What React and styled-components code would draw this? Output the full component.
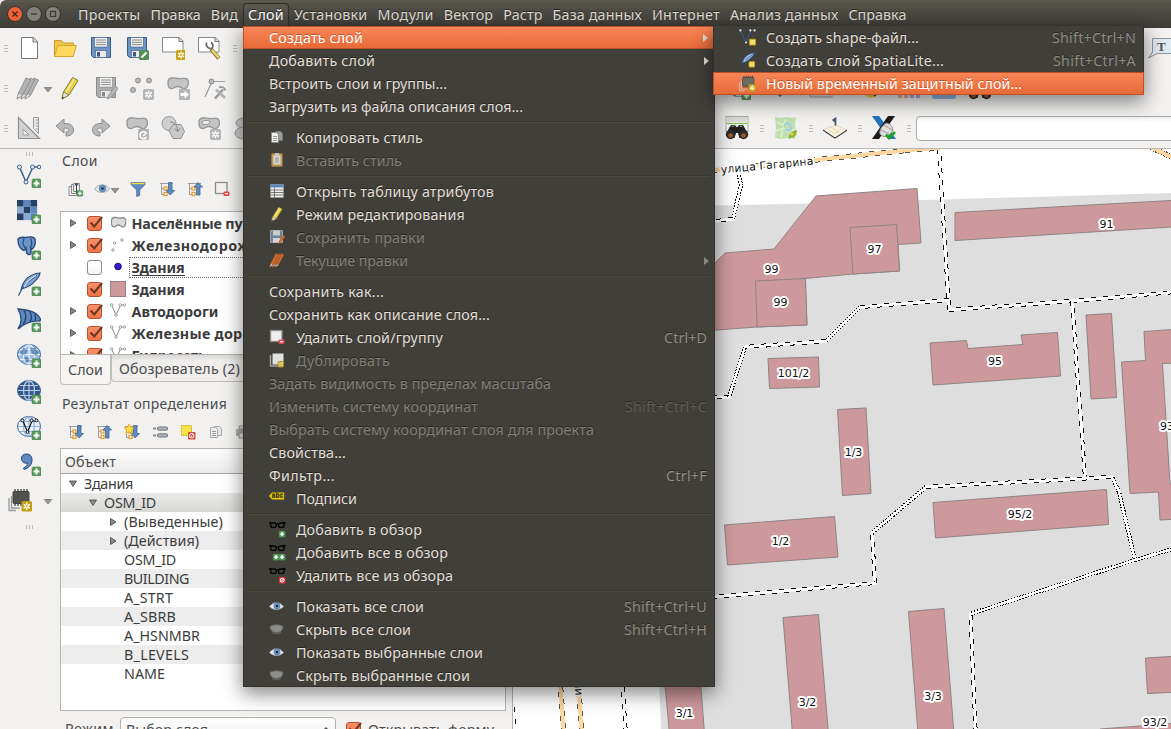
import React, { useLayoutEffect, useRef } from "react";
import styled, { createGlobalStyle, css } from "styled-components";

const Global = createGlobalStyle`
  * { box-sizing: border-box; }
  html, body { margin: 0; padding: 0; overflow: hidden; }
  body { font-family: "Noto Sans", "Open Sans", sans-serif; font-size: 14.3px; color: #4c4c4c; background: #f2f1f0; }
  svg { display: block; flex: none; }
`;

/* ---------- text with a fixed measure ---------- */
const TextSpan = styled.span`
  display: inline-block;
  white-space: pre;
  flex: none;
  line-height: 1;
`;
function Text({ w, children, className }) {
  const ref = useRef(null);
  useLayoutEffect(() => {
    const el = ref.current;
    el.style.letterSpacing = "0px";
    const natural = el.getBoundingClientRect().width;
    el.style.letterSpacing = `${(w - natural) / children.length}px`;
  }, [w, children]);
  return <TextSpan ref={ref} className={className}>{children}</TextSpan>;
}

/* ---------- window ---------- */
const Window = styled.div`
  position: relative;
  width: 1171px;
  height: 729px;
  overflow: hidden;
  display: flex;
  flex-direction: column;
  background: #f2f1f0;
`;
const MenuBar = styled.header`
  height: 28px;
  flex: none;
  display: flex;
  align-items: center;
  padding-left: 7px;
  background: linear-gradient(#56534b 0, #5f5c53 1px, #55524a 3px, #3e3d38 27px, #3a3935);
  border-radius: 6px 0 0 0;
`;
const WindowButtons = styled.div`
  display: flex;
  gap: 3px;
  width: 66px;
`;
const BarItem = styled.div`
  height: 28px;
  display: flex;
  align-items: center;
  color: #dfdbd2;
  border: 1px solid transparent;
  border-width: 0 1px;
  text-shadow: 0 -1px 0 #2a2926;
  padding: 2px 4px 0;
  ${(p) => p.$open && css`
    height: 25px;
    margin-top: 3px;
    padding-top: 0;
    padding-bottom: 1px;
    border: 1px solid #2f2e2a;
    border-bottom: 0;
    border-radius: 4px 4px 0 0;
    background: linear-gradient(#5a584f, #45443e);
    color: #fff;
  `}
`;

/* ---------- toolbars ---------- */
const Toolbars = styled.div`
  height: 121px;
  flex: none;
  border-bottom: 1px solid #b9b7b3;
  background: #f2f1f0;
`;
const ToolRow = styled.div`
  height: 40px;
  display: flex;
  align-items: center;
`;
const Cell = styled.div`
  width: ${(p) => p.$w || 36}px;
  flex: none;
  display: flex;
  align-items: center;
  justify-content: center;
`;
const Gap = styled.div`
  width: ${(p) => p.$w}px;
  flex: none;
`;
const Handle = styled.div`
  width: ${(p) => p.$w || 11}px;
  height: ${(p) => p.$h || 12}px;
  flex: none;
  display: flex;
  flex-direction: ${(p) => (p.$flat ? "row" : "column")};
  align-items: center;
  justify-content: center;
  gap: 2px;
  &::before, &::after { content: ""; }
  &::before, &::after, & > i {
    width: ${(p) => (p.$flat ? 1 : 4)}px;
    height: ${(p) => (p.$flat ? 4 : 1)}px;
    background: #bdbbb8;
  }
`;
const Grip = (p) => <Handle {...p}><i /></Handle>;
const SearchBox = styled.div`
  width: 265px;
  height: 25px;
  margin-left: 1px;
  flex: none;
  border: 1px solid #a9a7a3;
  border-radius: 4px;
  background: linear-gradient(#f0f0f0, #fff 5px);
`;

/* ---------- body ---------- */
const Body = styled.div`
  flex: 1;
  min-height: 0;
  display: flex;
`;
const SideBar = styled.nav`
  width: 60px;
  flex: none;
  display: flex;
  flex-direction: column;
`;
const SideCell = styled.div`
  height: 36px;
  flex: none;
  display: flex;
  align-items: center;
  padding-left: ${(p) => p.$x || 17}px;
`;
const Dock = styled.section`
  width: 453px;
  flex: none;
  display: flex;
  flex-direction: column;
  border-right: 1px solid #b4b2ae;
`;
const DockTitle = styled.h2`
  margin: ${(p) => p.$gap || 0}px 0 0;
  height: 24px;
  flex: none;
  padding-left: 2px;
  font-size: 14px;
  font-weight: 400;
  display: flex;
  align-items: center;
`;
const DockTools = styled.div`
  height: 32px;
  margin-bottom: ${(p) => p.$below || 0}px;
  flex: none;
  display: flex;
  align-items: center;
  padding-left: 2px;
`;
const Box = styled.div`
  width: 446px;
  height: ${(p) => p.$h}px;
  flex: none;
  overflow: hidden;
  background: #fff;
  border: 1px solid #b6b4b0;
`;
const LayerRow = styled.div`
  height: 22px;
  display: flex;
  align-items: center;
  font-weight: 700;
  color: #3c3c3c;
`;
const Slot = styled.div`
  width: ${(p) => p.$w}px;
  flex: none;
  display: flex;
  align-items: center;
`;
const LayerName = styled.div`
  height: 21px;
  padding: 2px 0 0 2px;
  display: flex;
  flex: 1;
  align-items: center;
  border: 1px dotted transparent;
  ${(p) => p.$current && css`
    padding-top: 3px;
    border-color: #666;
    span { border-bottom: 1px solid #3c3c3c; }
  `}
`;
const Check = styled.div`
  width: 15px;
  height: 15px;
  flex: none;
  border-radius: 3px;
  border: 1px solid ${(p) => (p.$on ? "#b9512c" : "#8d8b88")};
  background: ${(p) => (p.$on ? "linear-gradient(#f9906a, #ee7448)" : "linear-gradient(#fff, #f5f5f5)")};
  svg { margin-top: -1px; overflow: visible; }
`;
const Tabs = styled.div`
  height: 31px;
  flex: none;
  display: flex;
  align-items: flex-start;
`;
const Tab = styled.div`
  height: ${(p) => (p.$on ? 30 : 27)}px;
  width: ${(p) => p.$w}px;
  padding-left: 7px;
  padding-top: ${(p) => (p.$on ? 2 : 3)}px;
  display: flex;
  align-items: center;
  border: 1px solid #bfbdb9;
  border-top: 0;
  border-radius: 0 0 4px 4px;
  background: ${(p) => (p.$on ? "#f6f5f4" : "linear-gradient(#d9d8d6, #efeeed 6px, #f0efee)")};
`;
const TreeHead = styled.div`
  height: 25px;
  padding: 3px 0 0 4px;
  display: flex;
  align-items: center;
  background: linear-gradient(#fdfdfd, #ecebea);
  border-bottom: 1px solid #a5a3a0;
`;
const TreeRow = styled.div`
  height: 19px;
  display: flex;
  align-items: center;
  color: #3c3c3c;
  padding: 1px 0 0 ${(p) => 6 + p.$depth * 20}px;
  background: ${(p) => (p.$sel ? "linear-gradient(#e8e8e7, #d9d9d7)" : p.$alt ? "#ededed" : "#fff")};
`;
const ModeRow = styled.div`
  display: flex;
  padding-left: 5px;
  margin-top: 6px;
  height: 24px;
  flex: none;
  align-items: center;
`;
const Combo = styled.div`
  width: 216px;
  height: 24px;
  margin: 0 10px 0 6px;
  padding: 3px 5px 0 5px;
  flex: none;
  display: flex;
  align-items: center;
  justify-content: space-between;
  border: 1px solid #b1afab;
  border-radius: 4px;
  background: linear-gradient(#fff, #efeeed);
`;
const FormLabel = styled.div`
  padding-left: 7px;
`;
const MapView = styled.main`
  flex: 1;
  min-width: 0;
  background: #fff;
`;

/* ---------- drop-down menus ---------- */
const Popup = styled.div`
  position: absolute;
  left: ${(p) => p.$x}px;
  top: 26px;
  width: ${(p) => p.$w}px;
  background: #403f3a;
  box-shadow: 0 6px 18px 1px rgba(0, 0, 0, 0.46), inset 1px 0 #32312d, inset -1px -1px #32312d;
`;
const Item = styled.div`
  height: 23px;
  display: flex;
  align-items: center;
  padding: 1px ${(p) => p.$right}px 0 ${(p) => p.$left}px;
  color: ${(p) => (p.$off ? "#827f78" : "#e3dfd6")};
  text-shadow: 0 -1px 0 rgba(20, 20, 18, 0.6);
  position: relative;
  ${(p) => p.$hot && css`
    color: #fff;
    text-shadow: 0 -1px 0 rgba(150, 60, 20, 0.6);
    background: linear-gradient(#f98658, #e76a37);
    border: 1px solid #ba4f28;
    padding: 1px ${p.$right - 1}px 0 ${p.$left - 1}px;
  `}
`;
const IconSlot = styled.div`
  width: ${(p) => p.$w}px;
  flex: none;
  margin-top: -2px;
  opacity: ${(p) => (p.$off ? 0.85 : 1)};
`;
const Shortcut = styled.div`
  margin-left: auto;
  display: flex;
  color: ${(p) => (p.$off ? "#5f5d57" : "#8f8c84")};
`;
const Arrow = styled.div`
  position: absolute;
  right: 6px;
  width: 0;
  border: 4px solid transparent;
  border-left: 5px solid ${(p) => (p.$off ? "#8a877f" : "#e3dfd6")};
  border-right: 0;
`;
const Rule = styled.hr`
  height: 2px;
  margin: 3px 5px;
  border: 0;
  border-top: 1px solid #37362f;
  border-bottom: 1px solid #4a4943;
`;

/* ---------- icons ---------- */
const Svg = ({ s = 24, v = 24, children }) => (
  <svg width={s} height={s} viewBox={`0 0 ${v} ${v}`} fill="none">{children}</svg>
);
const Plus = ({ x = 15, y = 15, s = 9 }) => (
  <g transform={`translate(${x} ${y}) scale(${s / 9})`}>
    <rect width="9" height="9" rx="1.5" fill="#5a9a5d" stroke="#3f7a42" strokeWidth=".6" />
    <path d="M4.5 1.6v5.8M1.6 4.5h5.8" stroke="#fff" strokeWidth="2" />
  </g>
);
const Star = ({ x = 14, y = 14, c = "#c8a415", s = 10 }) => (
  <g transform={`translate(${x} ${y}) scale(${s / 10})`}>
    <rect width="10" height="10" rx="1.5" fill={c} />
    <path d="M5 1.5v7M2 3.2l6 3.6M8 3.2L2 6.8" stroke="#fff" strokeWidth="1.4" />
    <circle cx="5" cy="5" r=".9" fill={c} />
  </g>
);
const Tri = ({ down, s = 8, c = "#8b8987" }) => (
  <Svg s={s} v={8}>{down ? <path d="M.5 1h7L4 6.500z" fill={c} stroke="#444" strokeWidth=".8" /> : <path d="M1.5.5v7L7 4z" fill={c} stroke="#444" strokeWidth=".8" />}</Svg>
);
const DropTri = () => <Svg s={10} v={10}><path d="M1.300 4.500h7.400L5 9z" fill="#9a9896" stroke="#777573" strokeWidth=".8" /></Svg>;
const sheet = "M4.500 1.500h12l4 4v17h-16z";
const NewFile = () => <Svg><path d={sheet} fill="#fff" stroke="#777" /><path d="M16 1.500V6h4.500" stroke="#777" fill="#ddd" /></Svg>;
const Folder = () => <Svg><path d="M1.500 20.500V4.500h7l2 2.500h10v3" fill="#f0c64a" stroke="#c79a2b" /><path d="M1.500 20.500L5 9.500h18.300l-3 11z" fill="#ffd95c" stroke="#d0a435" /></Svg>;
const Floppy = ({ gray, pen, badge }) => {
  const a = gray ? "#adadad" : "#6b93c4", b = gray ? "#8a8a8a" : "#3b5a85";
  return (
    <Svg>
      <path d="M2.500 1.500h19v20h-17l-2-2z" fill={a} stroke={b} />
      <rect x="5.500" y="1.500" width="13" height="9.500" fill="#f4f4f2" stroke={b} strokeWidth=".6" />
      <path d="M7 4h10M7 6.300h10M7 8.600h10" stroke="#888" />
      <rect x="6.500" y="14.500" width="11" height="7" fill="#e9e9e9" stroke={b} strokeWidth=".6" />
      <rect x="8" y="16" width="3" height="4.500" fill={b} />
      {badge && <g><rect x="14" y="14" width="10" height="10" rx="1.500" fill="#4f8f54" /><path d="M16.500 21.500l5-5" stroke="#fff" strokeWidth="2.200" /></g>}
      {pen && <path d="M13.500 23l1-4 7-9 3 2.500-7 8.500z" fill={pen} stroke="#888" strokeWidth=".7" />}
    </Svg>
  );
};
const Page = ({ tool }) => (
  <Svg>
    <path d="M1.500 1.500h17l3.500 3.500v11h-20.500z" fill="#fff" stroke="#888" /><path d="M18 1.500V5.500h4" stroke="#777" fill="#ddd" />
    {tool ? <g><path d="M14 13l8 9.500" stroke="#8a7530" strokeWidth="4" /><path d="M15 14l7 8" stroke="#ead97c" strokeWidth="2.200" /><path d="M9.500 6.500c-1 3 1 6.500 5 6M14 6.500c2 1 2.500 4 1 6" stroke="#666" strokeWidth="1.800" /></g> : <Star x={15} y={14} />}
  </Svg>
);
const Pencil = ({ c = "#e7d24a", d = "#7a6d28", s = 24 }) => (
  <Svg s={s}><path d="M4 23l1.500-7L14.500 1.500l5.500 3L11 19z" fill={c} stroke={d} strokeWidth=".9" /><path d="M7.500 17L16.500 3" stroke="#fff" strokeOpacity=".6" strokeWidth="1.300" /><path d="M5.500 16l5.500 3-7 4z" fill="#e8e3da" stroke={d} strokeWidth=".7" /><path d="M4 23l.5-2.500 1.500 1z" fill="#333" /></Svg>
);
const Pencils = ({ c = "#b3b3b3", d = "#8a8a8a", s = 24 }) => (
  <Svg s={s}>{[8, 4, 0].map((o) => <g key={o}><path d={`M${1 + o} 23l1.500-6L${10 + o} 2l4.500 2L${6.500 + o} 19.500z`} fill={c} stroke={d} strokeWidth=".9" /><path d={`M${1 + o} 23l1.500-6 4 2.500z`} fill="#e2e0dc" stroke={d} strokeWidth=".6" /></g>)}</Svg>
);
const blob = "M2 6c0-5 6-4.500 10-3.500 3 .7 5-.8 8 0 3.500 1 3 9-1 10-3 .8-4-2-7-2-4 0-4 2.500-7 2-3-.4-3-3-3-6.500z";
const Blob = ({ badge = "#b5b5b5", mark, hole }) => (
  <Svg><path d={blob} fill="#c4c4c4" stroke="#979797" strokeWidth="1.300" />{hole && <ellipse cx="9" cy="6.500" rx="4" ry="2" fill="#f2f1f0" stroke="#979797" transform="rotate(-8 9 6.500)" />}
    {mark ? <g><rect x="13" y="13" width="11" height="11" rx="1" fill={badge} />{mark === "arrow" ? <path d="M14.500 17h4v-2.500l4.500 4-4.500 4V20h-4z" fill="#fff" /> : <path d="M21.500 17.500a3.500 3.500 0 1 0 0 3.500M18 20l3-2.500" stroke="#fff" strokeWidth="1.600" />}</g> : <Star x={13} y={13} c="#b5b5b5" s={11} />}</Svg>
);
const Dots = () => <Svg><g fill="#b9b9b9" stroke="#8f8f8f"><circle cx="8" cy="4.500" r="2.500" /><circle cx="19" cy="4.500" r="2.500" /><circle cx="3" cy="14" r="2.500" /></g><Star x={13} y={13} c="#b5b5b5" s={11} /></Svg>;
const Node = () => <Svg><path d="M2 21L9 5.500h13" stroke="#999" strokeWidth="1.200" /><circle cx="8.500" cy="5.500" r="2.500" fill="#bbb" stroke="#888" /><path d="M12 22.500l8-9" stroke="#999" strokeWidth="2.600" /><path d="M13 13.500l9 8.500" stroke="#b3b3b3" strokeWidth="2.800" /><path d="M16 11.500c3-1.500 5 0 6.500 3" stroke="#999" strokeWidth="1.800" /></Svg>;
const Ruler = () => <Svg><path d="M1.500 1.500v21h21z" fill="#d3d3d3" stroke="#8f8f8f" strokeWidth="1.200" /><path d="M6 13v6h6z" fill="#f2f1f0" stroke="#999" /><path d="M16.500 1.500h5v16l-5-5z" fill="#eee" stroke="#999" /><path d="M18.500 4h3M18.500 7h3M18.500 10h3M18.500 13h3" stroke="#999" /></Svg>;
const Undo = ({ flip }) => <Svg><g transform={flip ? "matrix(-1 0 0 1 24 0)" : undefined}><path d="M3 10l8-7v4.500c7-.5 9.500 3 9.500 6.500 0 4-3 6-7.500 6v-4c3.500 0 4-4.500-2-4V17z" fill="#b9b9b9" stroke="#8d8d8d" /></g></Svg>;
const Shapes = () => <Svg><circle cx="8" cy="7.500" r="7" fill="#cfcfcf" stroke="#999" /><path d="M8 15l4-6.500h8l3.500 7-3.500 7h-8z" fill="#c9c9c9" stroke="#949494" /><path d="M9 6c5 0 7 3 7.500 9M13.500 12.500l3 3 2.500-3" stroke="#888" /></Svg>;
const VLine = ({ c = "#3d5f8c", s = 24, children }) => (
  <Svg s={s}><path d="M2.500 3L9 18 16 3h6" stroke={c} strokeWidth="1.500" /><g fill="#e8eef6" stroke={c}><circle cx="2.500" cy="3" r="2" /><circle cx="9" cy="18" r="2" /><circle cx="15.500" cy="3" r="2" /><circle cx="22" cy="3" r="1.800" /></g>{children}</Svg>
);
const CHECKER = ["#263f66", "#5c86be", "#263f66", "#86a9d3", "#263f66", "#5c86be", "#263f66", "#86a9d3", "#5c86be"];
const Raster = () => <Svg>{CHECKER.map((c, i) => <rect key={i} x={(i % 3) * 6.700} y={Math.floor(i / 3) * 6.700} width="6.700" height="6.700" fill={c} />)}<Plus /></Svg>;
const Elephant = () => <Svg><path d="M1 3c3-3 6-1.500 8-1.500 3-1 8-1 9 1.500 1 5-1 9-3 10l-1-1v5.500c-1 2-4.500 1-4.500-1.500L9 12c-1 1-1 3-3 2C3 12.500 1 8 1 3z" fill="#6b95c8" stroke="#284a78" strokeWidth="1.400" /><path d="M7 2.500C5.500 6 6 10 9 12M13.500 2.500c2 4 1.500 7-.5 9" stroke="#284a78" strokeWidth="1.200" /><Plus /></Svg>;
const Feather = ({ s = 24, children }) => <Svg s={s}><path d="M4 18C6 9 12 2 23 1c-.5 4-2.500 6-5 8-3 4-7 6-12 7.500" fill="#7fa5d3" stroke="#284a78" strokeWidth="1.200" /><path d="M1.500 23.500C5 15 12 8 20 3.500" stroke="#284a78" strokeWidth="1.200" /><path d="M7 15C10 9 14 6 19 3.500" stroke="#dfeaf7" strokeWidth="1.200" />{children}</Svg>;
const Wing = () => <Svg><path d="M1 1c10 1 18 2 22.500 10l-.5 2C15 12.500 8 15 1 21c4-6 4-13 0-20z" fill="#5f8abf" stroke="#284a78" strokeWidth="1.300" /><path d="M7 2.500c3 5 2 10-1 14M13 4c2 4 2 7 0 9.500M18 6.500c1 3 1 4 0 6" stroke="#20416d" strokeWidth="1.300" /><Plus /></Svg>;
const Globe = ({ f = "#8fb3dc", st = "#e8f1fb", v, rows }) => (
  <Svg><ellipse cx="12" cy="10.500" rx="11.500" ry="10" fill={f} stroke="#3d6597" /><g stroke={st} strokeWidth="1.200"><path d="M1 10.500h22M3 5.500h18M3 15.500h18" /><ellipse cx="12" cy="10.500" rx="5.500" ry="9.700" /><path d="M12 1v19" /></g>
    {rows === "blotch" && <path d="M3 8l4-4 4 2-2 4-4 1zM13 4l5-.500 4 5-3 3-4-2zM7 13h4l2 4-4 2zM15 14l4 1-2 3z" fill="#3d6597" fillOpacity=".6" />}
    {v && <path d="M6 5l4.500 11L15 5h4.500" stroke="#111" strokeWidth="1.200" />}{v && <g fill="#fff" stroke="#111"><circle cx="5.500" cy="4.500" r="1.400" /><circle cx="10.500" cy="16" r="1.400" /><circle cx="14.500" cy="4.500" r="1.400" /><circle cx="19.500" cy="4.500" r="1.400" /></g>}<Plus /></Svg>
);
const Comma = () => <Svg><path d="M4.500 6c0-5 10-6 10.500 1 .5 6-4 9.500-8 10.500L6.500 16c3-1.500 4-3.500 4-5-3.500 1-6-1.500-6-5z" fill="#5f8abf" stroke="#284a78" /><Plus /></Svg>;
const Chip = ({ s = 24, body = "#51524b", trace = "#999" }) => <Svg s={s}><path d="M1 10v12.500h7M3.500 8v12h8" stroke={trace} strokeWidth="1.300" /><rect x="5" y="3.500" width="16" height="12" rx="1" fill={body} stroke="#444" /><path d="M7 1v3M10 1v3M13 1v3M16 1v3M19 1v3M7 15v3M10 15v3M13 15v3" stroke="#444" strokeWidth="1.300" /><Star x={13.500} y={13} s={10.500} c="#c3a012" /></Svg>;
const AddGroup = () => <Svg s={16} v={16}><path d="M3.500 5.500h-2.500v9h8v-2M5.500 3.500h-2v9h8M5.500 2.500h6v8h-6z" stroke="#888" /><path d="M8.500 12V3M7 4.500L8.500 2 10 4.500" stroke="#345" /><Plus x={9} y={9.500} s={5.800} /></Svg>;
const Eye = ({ s = 16, closed }) => closed ? (
  <Svg s={s} v={16}><path d="M1 5c3-2.500 11-2.500 14 0-1 4.500-3.500 6-7 6S2 9.500 1 5z" fill="#8d8d8b" stroke="#6f6f6c" /><path d="M3 11c3 2 7 2 10 0" stroke="#666" /></Svg>
) : (
  <Svg s={s} v={16}><path d="M.5 8c4-5.500 11-5.500 15 0-4 4.500-11 4.500-15 0z" fill="#e4e8ee" stroke="#9b9b9b" strokeWidth=".8" /><circle cx="8.500" cy="7.500" r="3.300" fill="#6c97cc" stroke="#456c9d" strokeWidth=".6" /><circle cx="8.500" cy="7.500" r="1.300" fill="#1d2b40" /></Svg>
);
const Funnel = () => <Svg s={16} v={16}><path d="M1 1.500h14v2L9.700 9v5.500l-3 1V9L1 3.500z" fill="#5f8abf" stroke="#4a6d9a" strokeWidth=".8" /><path d="M1.500 1.800h13v1.400h-13z" fill="#f3e04c" /></Svg>;
const TreeArrow = ({ up, star }) => <Svg s={16} v={16}><path d="M2.500 2v11.500h3M2.500 7.500h3M1 2.500h13" stroke="#9b9b9b" /><rect x="5" y="6" width="3" height="3" stroke="#e59a2e" fill="#fff" strokeWidth="1.200" /><rect x="5" y="11.500" width="3" height="3" stroke="#e59a2e" fill="#fff" strokeWidth="1.200" />
  {up ? <path d="M9.500 14V6H7l4-4.500L15.500 6H13v8z" fill="#5f8abf" stroke="#3d6597" strokeWidth=".8" /> : <path d="M9.500 1.500v8H7l4.200 4.500 4.300-4.500H13v-8z" fill="#5f8abf" stroke="#3d6597" strokeWidth=".8" />}
  {star && <path d="M5 0l1.500 3.200 3.500.4-2.600 2.400.7 3.500L5 7.800 1.900 9.500l.7-3.500L0 3.600l3.500-.4z" fill="#ffe14b" stroke="#d9a514" strokeWidth=".8" />}</Svg>;
const Remove = ({ fill = "none" }) => <Svg s={16} v={16}><rect x="1.500" y="1.500" width="11.500" height="11" fill={fill} stroke="#8b8b8b" strokeWidth="1.300" /><rect x="9.500" y="10.500" width="6" height="4.500" rx="1" fill="#e9494c" /><path d="M11 12.700h3" stroke="#fff" strokeWidth="1.200" /></Svg>;
const FormIcon = () => <Svg s={16} v={16}><path d="M1 4.500h3M1 11.500h3" stroke="#888" strokeWidth="2" /><rect x="5.500" y="3" width="10" height="3.200" rx="1" fill="#a9b3bf" stroke="#777" /><rect x="5.500" y="9.800" width="10" height="3.200" rx="1" fill="#a9b3bf" stroke="#777" /></Svg>;
const Deselect = () => <Svg s={16} v={16}><rect x="1.500" y="1.500" width="10" height="10" fill="#fbe24b" stroke="#c9ac24" strokeDasharray="2 1" /><rect x="8" y="8" width="7.500" height="7.500" rx="1" fill="#d9423e" /><circle cx="11.700" cy="11.700" r="2.300" stroke="#fff" /><path d="M10 13.500l3.500-3.500" stroke="#fff" /></Svg>;
const Copy = ({ dark }) => <Svg s={16} v={16}><path d="M6.500 2.500h5l2 2v7h-7z" fill={dark ? "#9a9a96" : "#e5e5e5"} stroke={dark ? "#777" : "#aaa"} /><path d="M2.500 3.500h5l2 2v8h-7z" fill="#efefed" stroke={dark ? "#888" : "#aaa"} /><path d="M4 7.500h4M4 9.500h4M4 11.500h4" stroke="#999" /></Svg>;
const Print = () => <Svg s={16} v={16}><rect x="1" y="5" width="14" height="7" rx="1" fill="#aaa" /><path d="M4 2h8v3H4zM4 9h8v5H4z" fill="#ddd" stroke="#999" /></Svg>;
const Paste = () => <Svg s={16} v={16}><rect x="2.500" y="1.500" width="11" height="13" rx="1" fill="#d3a95f" stroke="#9c783e" /><path d="M4.500 3.500h7v9h-7z" fill="#f5f5f3" /><path d="M6 1h4v2.500H6z" fill="#ddd" /><path d="M6 6h4M6 8h4M6 10h4" stroke="#999" /></Svg>;
const TableIcon = () => <Svg s={16} v={16}><rect x="1.500" y="1.500" width="13" height="13" fill="#f1f1ef" /><rect x="1.500" y="1.500" width="13" height="3" fill="#5c86be" /><path d="M1.500 7h13M1.500 9.500h13M1.500 12h13M5.500 4.500v10" stroke="#666" strokeWidth=".9" /></Svg>;
const Dup = () => <Svg s={16} v={16}><path d="M1.500 3v11h9" stroke="#b5b5b5" strokeWidth="1.500" /><rect x="3.500" y="1.500" width="11" height="11" fill="#fff" /><rect x="9" y="9.500" width="5.500" height="5.500" rx="1" fill="#f1dc78" stroke="#c3a012" /></Svg>;
const LabelIcon = () => <Svg s={16} v={16}><path d="M0 6L3 2.500h12v7H3z" fill="#e3c91e" stroke="#a38d12" strokeWidth=".6" /><text x="2.800" y="8.300" fontSize="6.500" fontWeight="700" fontFamily="Liberation Sans, sans-serif" fill="#443c0a">abc</text></Svg>;
const Glasses = ({ n = 1, no }) => <Svg s={17} v={17}><path d="M0 2.500C1 1 2 1.500 2.500 2M16.500 2.500C15.500 1 14.500 1.500 14 2M7 3.500c1-.8 2-.8 3 0" stroke="#000" strokeWidth="1.300" /><rect x="1.700" y="2" width="5.600" height="4.400" rx="2" stroke="#000" strokeWidth="1.300" /><rect x="9.500" y="2" width="5.600" height="4.400" rx="2" stroke="#000" strokeWidth="1.300" />
  {no ? <g><rect x="10" y="10" width="6.500" height="6.500" fill="#d9323a" /><circle cx="13.200" cy="13.200" r="1.900" stroke="#fff" /><path d="M12 14.500l2.500-2.500" stroke="#fff" /></g> : <g>{n > 1 && <Plus x={4} y={10} s={6.200} />}<Plus x={10} y={10} s={6.200} /></g>}</Svg>;
const NewVector = ({ feather }) => {
  const badge = <rect x="15" y="14.500" width="8.500" height="8" rx="1" fill="#f2df7c" stroke="#c3a012" strokeWidth="1.500" />;
  return feather ? <Feather s={16}>{badge}</Feather> : <Svg s={17}><path d="M2 2l8 17L17 2h5" stroke="#3d5575" strokeWidth="1.800" /><g fill="#e8eef6"><circle cx="2" cy="2" r="1.500" /><circle cx="16" cy="2" r="1.500" /><circle cx="22" cy="2" r="1.500" /><circle cx="10" cy="19" r="1.500" /></g>{badge}</Svg>;
};
const Binoculars = ({ win }) => <Svg>{win && <g><rect x="1" y=".5" width="22" height="15" fill="#f4f4f2" stroke="#a9a9a9" /><path d="M1 1h22v5H1z" fill="#d9d9d7" /><path d="M1.500 7.500h21" stroke="#79c24a" strokeWidth="1.200" /></g>}
  <path d="M2.500 15l3.500-6h4l1.500 2h1L14 9h4l3.500 6v7h-7l-1.500-5h-2l-1.500 5h-7z" fill="#1f1f1f" /><circle cx="5.500" cy="18.500" r="4.700" fill="#2a2a2a" /><circle cx="18.500" cy="18.500" r="4.700" fill="#2a2a2a" /><circle cx="5.500" cy="19.500" r="2.300" fill="#a4592c" /><circle cx="18.500" cy="19.500" r="2.300" fill="#a4592c" /><path d="M6.500 10.500l3-.5M14.500 10l3 .5" stroke="#777" strokeWidth="1.500" /></Svg>;
const GreenMap = () => <Svg><path d="M1 1l6 1 5-1 6 1 4-1-1 8 1 7-1 7-8-1-6 1-6-1 1-8z" fill="#c0dfac" /><path d="M3 6l6 3 3-6M2 15l7-3 5 4 8-3M9 12l-2 10" stroke="#ddefcf" strokeWidth="1.500" /><path d="M10 9c4-3 7-1 7 3s-5 3-6 1" stroke="#a5cfe0" strokeWidth="2" /><path d="M14.500 23c0-5 3-8 8.500-9 0 5-2.500 8-6.500 8z" fill="#8db53b" /><circle cx="18" cy="18" r="1.500" fill="#f3d63a" /></Svg>;
const FoldMap = () => <Svg><path d="M0 14l12-5 12 5-12 8z" fill="#f8f2e3" stroke="#d0c5ab" strokeWidth=".6" /><path d="M5 13l7 5 6-5M8 11l8 6" stroke="#e9c384" strokeWidth=".7" /><path d="M0 13.500l12 8 12-8v1.200l-12 8-12-8z" fill="#333" /><path d="M9.500 4.500l3-2v7M10.500 5h2" stroke="#4b5a70" strokeWidth="1.800" /></Svg>;
const XIcon = () => <Svg><path d="M0 0h7l17 23h-8z" fill="#2273bd" /><path d="M16 0h7L7 23H0z" fill="#1b1b1b" /><path d="M14 7c-4 3-7 7-6 11 3 4 8 3 12-2 2-3 0-8-6-9z" fill="#dededc" stroke="#888" /><path d="M9 14l8 4M12 9l8 5" stroke="#999" /><path d="M14 18.500l3 3.500 6-6" stroke="#1aa51a" strokeWidth="2.600" /></Svg>;
const NoteIcon = () => <Svg><path d="M4.500 2.500h22v15H9L.500 22 4.500 16z" fill="#dfe9f0" stroke="#8f979e" /><text x="9" y="14.500" fontSize="13" fontFamily="Liberation Serif, serif" fontWeight="700" fill="#555">T</text></Svg>;
const Overlay = () => <Svg><g fill="#c9c9c9" stroke="#949494"><ellipse cx="11" cy="7" rx="8" ry="5" /><ellipse cx="11" cy="17" rx="9" ry="6" /></g></Svg>;
const Tick = () => <Svg s={15} v={15}><path d="M2.500 6.500l3.800 4L14 1" stroke="#6e3722" strokeWidth="2.100" /></Svg>;

/* ---------- data ---------- */
const BAR = [["Проекты", 62.400], ["Правка", 50.400], ["Вид", 27.200], ["Слой", 36, true], ["Установки", 73.400], ["Модули", 56.400], ["Вектор", 49.400], ["Растр", 39.400], ["База данных", 89.400], ["Интернет", 68], ["Анализ данных", 108.400], ["Справка", 58]];
const OFF = { off: true };
const MENU = [
  ["Создать слой", 94, null, { hot: true, sub: true }], ["Добавить слой", 106, null, { sub: true }], ["Встроить слои и группы...", 178], ["Загрузить из файла описания слоя...", 254], null,
  ["Копировать стиль", 127, <Copy dark />], ["Вставить стиль", 106, <Paste />, OFF], null,
  ["Открыть таблицу атрибутов", 198, <TableIcon />], ["Режим редактирования", 169, <Pencil s={16} />], ["Сохранить правки", 129, <FloppySmall />, OFF], ["Текущие правки", 112, <Pencils c="#e5702f" d="#8a4a22" s={16} />, { off: true, sub: true }], null,
  ["Сохранить как...", 115], ["Сохранить как описание слоя...", 221], ["Удалить слой/группу", 147, <Remove fill="#eee" />, { key: ["Ctrl+D", 43] }], ["Дублировать", 94, <Dup />, OFF],
  ["Задать видимость в пределах масштаба", 282, null, OFF], ["Изменить систему координат", 209, null, { off: true, key: ["Shift+Ctrl+C", 82] }], ["Выбрать систему координат слоя для проекта", 325, null, OFF], ["Свойства...", 77], ["Фильтр...", 66, null, { key: ["Ctrl+F", 41] }], ["Подписи", 61, <LabelIcon />], null,
  ["Добавить в обзор", 126, <Glasses />], ["Добавить все в обзор", 152, <Glasses n={2} />], ["Удалить все из обзора", 157, <Glasses no />], null,
  ["Показать все слои", 128, <Eye s={15} />, { key: ["Shift+Ctrl+U", 83] }], ["Скрыть все слои", 115, <Eye s={15} closed />, { key: ["Shift+Ctrl+H", 83] }], ["Показать выбранные слои", 187, <Eye s={15} />], ["Скрыть выбранные слои", 174, <Eye s={15} closed />],
];
function FloppySmall() {
  return <Svg s={16} v={16}><path d="M1.500 1.500h12v12h-12z" fill="#7391ad" stroke="#a3b3c3" /><rect x="4" y="1.500" width="7" height="5" fill="#e4e4e4" /><rect x="4" y="9" width="7" height="4.500" fill="#eee" /><path d="M9 15l1-3 4-6 2 1.500-4 6z" fill="#f0702c" /></Svg>;
}
const SUB = [
  ["Создать shape-файл...", 153, <NewVector />, { key: ["Shift+Ctrl+N", 84] }],
  ["Создать слой SpatiaLite...", 178, <NewVector feather />, { key: ["Shift+Ctrl+A", 83] }],
  ["Новый временный защитный слой...", 256, <Chip s={17} body="#6b6b62" trace="#c9c5bd" />, { hot: true }],
];
const MenuItems = ({ items, left, right, slot }) => items.map((it, i) => {
  if (!it) return <Rule key={i} />;
  const [label, w, icon, o = {}] = it;
  return (
    <Item key={i} $left={left} $right={right} $off={o.off} $hot={o.hot}>
      {icon && <IconSlot $w={slot} $off={o.off}>{icon}</IconSlot>}
      <Text w={w}>{label}</Text>
      {o.key && <Shortcut $off={o.off}><Text w={o.key[1]}>{o.key[0]}</Text></Shortcut>}
      {o.sub && <Arrow $off={o.off} />}
    </Item>
  );
});

const BlobSmall = () => <Svg s={17}><path d={blob} fill="#dcdcdc" stroke="#8b8b8b" strokeWidth="1.500" transform="translate(0 1) scale(1 1.250)" /></Svg>;
const DotsSmall = () => <Svg s={16} v={16}><g stroke="#999" fill="#fff"><circle cx="3" cy="13" r="1.200" /><circle cx="4.500" cy="6" r="1.200" /><circle cx="12" cy="3" r="1.200" /></g></Svg>;
const LAYERS = [
  ["Населённые пункты", 148, true, true, <BlobSmall />], ["Железнодорожные", 150, true, true, <DotsSmall />],
  ["Здания", 53, false, false, <Svg s={16} v={16}><circle cx="8" cy="7.500" r="3.300" fill="#3d17d6" stroke="#1d0b70" /></Svg>, true],
  ["Здания", 53, true, false, <Svg s={16} v={16}><rect x=".5" y=".5" width="15" height="15" fill="#ce999c" stroke="#9c7f80" /></Svg>],
  ["Автодороги", 87, true, true, <VLine c="#8b8b8b" s={16} />], ["Железные дороги", 137, true, true, <VLine c="#8b8b8b" s={16} />], ["Гидросеть", 75, true, true, <VLine c="#8b8b8b" s={16} />],
];
const TREE = [["Здания", 49, 0, true], ["OSM_ID", 52, 1, true], ["(Выведенные)", 99, 2, false], ["(Действия)", 75, 2, false], ["OSM_ID", 52, 2], ["BUILDING", 65, 2], ["A_STRT", 49, 2], ["A_SBRB", 52, 2], ["A_HSNMBR", 76, 2], ["B_LEVELS", 65, 2], ["NAME", 41, 2]];

/* ---------- map ---------- */
const BUILDINGS = [
  "690,275 715,263 725,253 774,249 816,196 917,188.500 921,243 898,244.500 899.500,271 853,274 805,278.500 807,325 757,327 690,332",
  "850,227.500 896.500,224.500 899.500,271 853,274", "755.500,281 805.500,278.500 807,325 757,327",
  "955,212.500 1180,200 1180,226.500 955,240.500",
  "930,343 966.500,340.500 968,348.500 1023,344.500 1021,335 1057.500,332.500 1060.500,376 933,385",
  "1086,315 1111.500,313.500 1116.500,397.500 1091,399",
  "1144,331.500 1180,329 1180,363 1162.500,363.500 1170,484 1180,484 1180,519 1160,520 1158.500,492 1130,493.500 1121.500,362 1145.500,360.500",
  "768,358.500 818.500,357 819.500,387 769.500,388.500", "837.500,409.500 866,408 871,493.500 842.500,495.500",
  "724.500,525 834.500,516.500 838,557 727.500,565", "783,617.500 818.500,614.500 829,740 793,740",
  "908.500,611.500 944,608.500 954.500,740 918.500,740", "933,502.500 1106.500,489.500 1108.500,524.500 935.500,538",
  "1145.500,658 1180,656 1180,692 1147.500,693.500", "1100,729 1180,723 1180,740 1100,740", "662,650 698,650 705,740 670,740",
];
const PATHS = [
  [[939, 149], [949, 310], [1072, 301], [1180, 291.500]], [[949, 300], [860, 307], [826, 341], [745, 347], [729, 397], [700, 398]],
  [[1072, 301], [1085, 477]], [[700, 598], [875, 583], [872, 533], [926, 487], [1112, 477], [1119, 492], [1135, 560]],
  [[737, 166], [741, 185], [733, 219], [700, 223]], [[976, 740], [970.500, 614], [1135, 560], [1180, 547]],
  [[622, 680], [626, 735]], [[512, 700], [515, 735]],
];
const LABELS = [["97", 874.500, 253], ["99", 771.500, 272.500], ["99", 780.500, 306], ["91", 1106.500, 228], ["95", 995, 365], ["101/2", 793.500, 377], ["1/3", 853.500, 456], ["1/2", 780.500, 545], ["95/2", 1020, 518], ["93", 1167, 430], ["3/2", 807.500, 706], ["3/3", 933, 699.500], ["93/2", 1155, 725.500], ["3/1", 684.500, 717]];
const MapLabel = styled.text`
  font: 11px "DejaVu Sans", sans-serif;
  text-anchor: middle;
  fill: #111;
  stroke: #fff;
  stroke-width: 4px;
  stroke-linejoin: round;
  paint-order: stroke;
`;
/* One leg of a line: a plain core and two dashed edges that alternate. */
const Leg = ({ a, b, half, edge }) => {
  const dx = b[0] - a[0], dy = b[1] - a[1], len = Math.hypot(dx, dy);
  const nx = (-dy / len) * half, ny = (dx / len) * half;
  const oblique = Math.min(Math.abs(dx), Math.abs(dy)) / len > 0.2;
  const dash = oblique ? "1.500 1.500" : "5 7";
  return [1, -1].map((k) => (
    <line key={k} x1={a[0] + nx * k} y1={a[1] + ny * k} x2={b[0] + nx * k} y2={b[1] + ny * k}
      stroke={edge} strokeDasharray={dash} strokeDashoffset={k > 0 ? 0 : 5} shapeRendering="crispEdges" />
  ));
};
const Track = ({ pts, core = "#fff", edge = "#000", width = 3.200, half = 1.600 }) => (
  <g>
    <polyline points={pts.join(" ")} stroke={core} strokeWidth={width} />
    {pts.slice(1).map((p, i) => <Leg key={i} a={pts[i]} b={p} half={half} edge={edge} />)}
  </g>
);
const ROADS = [[[700, 171.500], [815, 160], [905, 150.500], [940, 148]], [[1148, 146], [1176, 159]], [[560, 680], [564, 735]], [[578, 680], [582, 735]]];
const CityMap = () => (
  <svg width="658" height="580" viewBox="513 149 658 580" fill="none">
    <polygon points="640,207 790,204 942,199.500 1171,193 1171,729 661,729" fill="#dedede" />
    <g fill="#ce999c" stroke="#8f8384">{BUILDINGS.map((b) => <polygon key={b} points={b} />)}</g>
    {PATHS.map((p) => <Track key={p.join()} pts={p} />)}
    {ROADS.map((p) => <Track key={p.join()} pts={p} core="#fdd6a0" edge="#555" width={4.200} half={2.300} />)}
    <MapLabel transform="translate(767.500 169) rotate(-5.500)" textLength="93">улица Гагарина</MapLabel>
    <MapLabel transform="translate(581 688) rotate(-94)">ий</MapLabel>
    {LABELS.map(([t, x, y]) => <MapLabel key={t + x} x={x} y={y}>{t}</MapLabel>)}
  </svg>
);

export default function App() {
  return (
    <>
      <Global />
      <Window>
        <MenuBar>
          <WindowButtons>
            <Svg s={16} v={16}><circle cx="8" cy="8" r="7.500" fill="#ef6138" stroke="#35342f" /><path d="M5.500 5.500l5 5M10.500 5.500l-5 5" stroke="#50291c" strokeWidth="1.500" /></Svg>
            <Svg s={16} v={16}><circle cx="8" cy="8" r="7.500" fill="#82807a" stroke="#35342f" /><path d="M5 8h6" stroke="#3b3a36" strokeWidth="1.300" /></Svg>
            <Svg s={16} v={16}><circle cx="8" cy="8" r="7.500" fill="#82807a" stroke="#35342f" /><rect x="5.500" y="5.500" width="5" height="5" stroke="#3b3a36" strokeWidth="1.200" /></Svg>
          </WindowButtons>
          {BAR.map(([t, w, open]) => <BarItem key={t} $open={open}><Text w={w}>{t}</Text></BarItem>)}
        </MenuBar>

        <Toolbars>
          <ToolRow>
            <Grip />
            <Cell><NewFile /></Cell><Cell><Folder /></Cell><Cell><Floppy /></Cell><Cell><Floppy badge /></Cell><Cell><Page /></Cell><Cell><Page tool /></Cell>
            <Grip $w={16} /><Gap $w={905} /><NoteIcon />
          </ToolRow>
          <ToolRow>
            <Grip />
            <Cell $w={33}><Pencils /></Cell><Cell $w={8}><DropTri /></Cell><Cell><Pencil /></Cell><Cell><Floppy gray pen="#b5b5b5" /></Cell><Cell><Dots /></Cell><Cell><Blob mark="arrow" /></Cell><Cell $w={37}><Node /></Cell><Cell $w={50}><Blob /></Cell>
            <Gap $w={438} />
            <Cell><Globe /></Cell><Cell $w={46}><Svg><path d="M12 8l6 7-6 6-6-6z" fill="#666" /></Svg></Cell><Cell><Svg><rect x="1" y="8" width="22" height="13" fill="#e4e4e2" stroke="#aaa" /></Svg></Cell><Gap $w={15} />
            <Cell><Svg><circle cx="11" cy="15" r="7" fill="#f0cf4a" /><path d="M14 20l8-7" stroke="#444" strokeWidth="2" /></Svg></Cell>
            <Cell><Svg><path d="M2 12h4v10H2zM8 12h4v10H8z" fill="#e2b0a0" /><path d="M14 12h4v10h-4zM20 12h4v10h-4z" fill="#a8b0dc" /></Svg></Cell>
            <Cell><Svg><rect y="8" width="24" height="15" rx="2" fill="#8fb9e6" /></Svg></Cell><Cell><Binoculars /></Cell>
          </ToolRow>
          <ToolRow>
            <Grip />
            <Cell><Ruler /></Cell><Cell><Undo /></Cell><Cell><Undo flip /></Cell><Cell><Blob mark="turn" /></Cell><Cell><Shapes /></Cell><Cell><Blob hole /></Cell><Cell $w={36}><Overlay /></Cell>
            <Gap $w={456} />
            <Cell><Binoculars win /></Cell><Grip $w={13} /><Cell><GreenMap /></Cell><Grip $w={13} /><Cell><FoldMap /></Cell><Grip $w={13} /><Cell><XIcon /></Cell><Grip $w={13} />
            <SearchBox />
          </ToolRow>
        </Toolbars>

        <Body>
          <SideBar>
            <Grip $flat $w={59} $h={9} />
            <SideCell><VLine><Plus /></VLine></SideCell><SideCell><Raster /></SideCell><SideCell><Elephant /></SideCell><SideCell><Feather><Plus /></Feather></SideCell><SideCell><Wing /></SideCell>
            <SideCell><Globe rows="blotch" f="#9fc0e3" /></SideCell><SideCell><Globe f="#33578a" st="#b9d0ea" /></SideCell><SideCell><Globe f="#eaf1f9" st="#8fb3dc" v /></SideCell><SideCell><Comma /></SideCell>
            <SideCell $x={8}><Chip /><Gap $w={11} /><DropTri /></SideCell>
            <Grip $flat $w={59} $h={18} />
          </SideBar>
          <Dock>
            <DockTitle><Text w={36}>Слои</Text></DockTitle>
            <DockTools $below={6}>
              <Cell $w={28}><AddGroup /></Cell><Cell $w={33}><Eye s={16} /><DropTri /></Cell><Cell $w={30}><Funnel /></Cell><Cell $w={28}><TreeArrow /></Cell><Cell $w={28}><TreeArrow up /></Cell><Cell $w={26}><Remove /></Cell>
            </DockTools>
            <Box $h={144}>
              {LAYERS.map(([t, w, on, kids, icon, cur], i) => (
                <LayerRow key={i}>
                  <Slot $w={26}><Gap $w={8} />{kids && <Tri />}</Slot>
                  <Slot $w={23}><Check $on={on}>{on && <Tick />}</Check></Slot>
                  <Slot $w={18.500}>{icon}</Slot>
                  <LayerName $current={cur}><Text w={w}>{t}</Text></LayerName>
                </LayerRow>
              ))}
            </Box>
            <Tabs>
              <Tab $on $w={51}><Text w={35}>Слои</Text></Tab>
              <Tab $w={140}><Text w={121}>Обозреватель (2)</Text></Tab>
            </Tabs>
            <DockTitle $gap={6}><Text w={165}>Результат определения</Text></DockTitle>
            <DockTools>
              <Cell $w={28}><TreeArrow /></Cell><Cell $w={28}><TreeArrow up /></Cell><Cell $w={28}><TreeArrow star /></Cell><Cell $w={28}><FormIcon /></Cell><Cell $w={28}><Deselect /></Cell><Cell $w={28}><Copy /></Cell><Cell $w={26}><Print /></Cell>
            </DockTools>
            <Box $h={263}>
              <TreeHead><Text w={51}>Объект</Text></TreeHead>
              {TREE.map(([t, w, d, open], i) => (
                <TreeRow key={i} $depth={d} $sel={i === 1} $alt={i % 2 === 1}>
                  <Slot $w={17}>{open !== undefined && <Gap $w={2} />}{open !== undefined && <Tri down={open} />}</Slot>
                  <Text w={w}>{t}</Text>
                </TreeRow>
              ))}
            </Box>
            <ModeRow>
              <Text w={49}>Режим</Text>
              <Combo><Text w={82}>Выбор слоя</Text><Svg s={8} v={8}><path d="M0 4l4-4 4 4z" fill="#555" /></Svg></Combo>
              <Check $on><Tick /></Check>
              <FormLabel><Text w={126}>Открывать форму</Text></FormLabel>
            </ModeRow>
          </Dock>
          <MapView><CityMap /></MapView>
        </Body>

        <Popup $x={243} $w={472}><MenuItems items={MENU} left={26} right={8} slot={27} /></Popup>
        <Popup $x={713} $w={431}><MenuItems items={SUB} left={26} right={8} slot={27} /></Popup>
      </Window>
    </>
  );
}
